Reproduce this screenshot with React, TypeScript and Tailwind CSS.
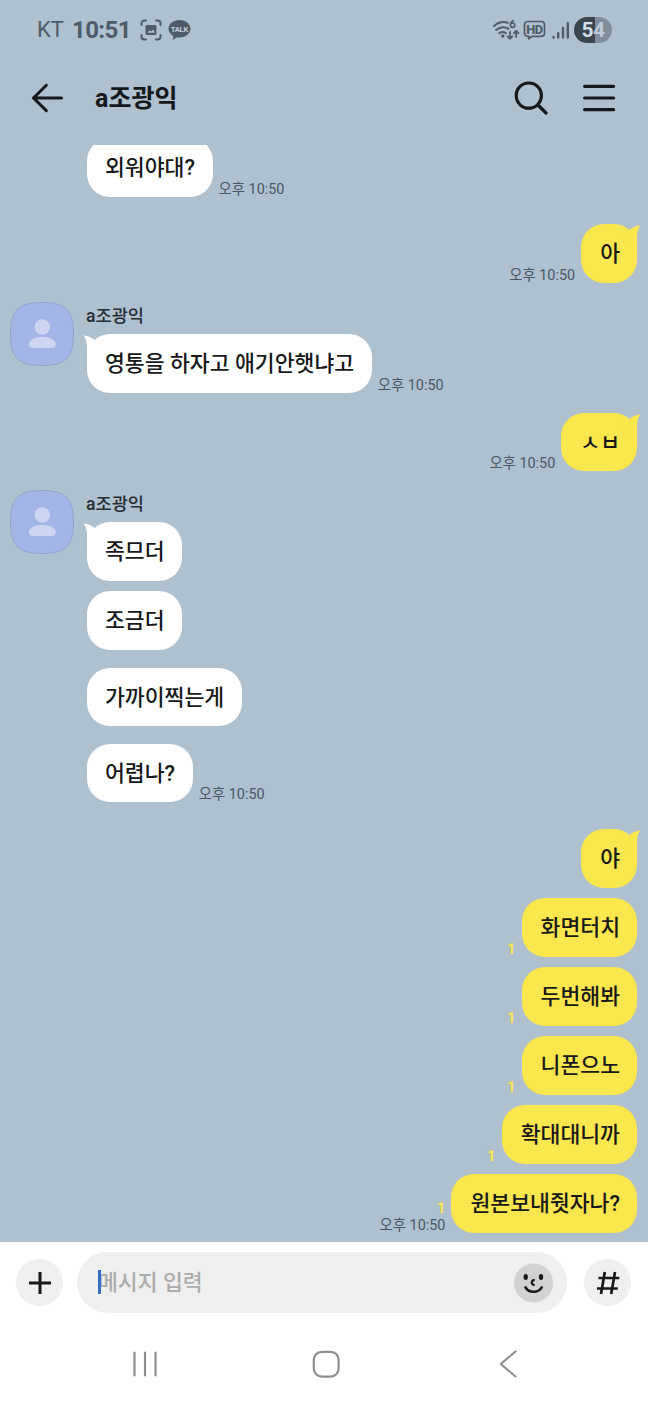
import type { ReactNode } from 'react'
import { clsx } from 'clsx'

/* ── Data ──────────────────────────────────────── */
interface Message {
  text: string
  gap?: string
  time?: string
  unread?: number
}
interface Group {
  from: 'me' | 'other'
  tail: boolean
  gap: string
  messages: Message[]
}

const NAME = 'a조광익'
const TIME = '오후 10:50'

const groups: Group[] = [
  { from: 'other', tail: false, gap: '-mt-[6.6px]', messages: [{ text: '외워야대?', time: TIME }] },
  { from: 'me', tail: true, gap: 'mt-[27.3px]', messages: [{ text: '아', time: TIME }] },
  { from: 'other', tail: true, gap: 'mt-[19px]', messages: [{ text: '영통을 하자고 애기안햇냐고', time: TIME }] },
  { from: 'me', tail: true, gap: 'mt-[20px]', messages: [{ text: 'ㅅㅂ', time: TIME }] },
  {
    from: 'other',
    tail: true,
    gap: 'mt-[18.6px]',
    messages: [
      { text: '족므더' },
      { text: '조금더', gap: 'mt-[10.6px]' },
      { text: '가까이찍는게', gap: 'mt-[17.7px]' },
      { text: '어렵나?', gap: 'mt-[17.5px]', time: TIME },
    ],
  },
  {
    from: 'me',
    tail: true,
    gap: 'mt-[27.3px]',
    messages: [
      { text: '야' },
      { text: '화면터치', gap: 'mt-[10.5px]', unread: 1 },
      { text: '두번해봐', gap: 'mt-[10.5px]', unread: 1 },
      { text: '니폰으노', gap: 'mt-[10.5px]', unread: 1 },
      { text: '확대대니까', gap: 'mt-[10.5px]', unread: 1 },
      { text: '원본보내줫자나?', gap: 'mt-[10.5px]', unread: 1, time: TIME },
    ],
  },
]

/* ── Status bar ────────────────────────────────── */
function StatusBar() {
  return (
    <div className="flex h-[60px] items-center justify-between pl-[37px] pr-[36px] text-[#4f5c67]">
      <div className="flex items-center">
        <span className="w-[35px] text-[22px] leading-none">KT</span>
        <span className="w-[68px] text-[24px] font-bold leading-none tracking-[-0.6px]">10:51</span>
        <svg width="22" height="22" viewBox="0 0 22 22" fill="none" stroke="currentColor" strokeWidth="2" strokeLinecap="round">
          <path d="M1.500 6V4.500a3 3 0 0 1 3-3H6M16 1.500h1.500a3 3 0 0 1 3 3V6M20.500 16v1.500a3 3 0 0 1-3 3H16M6 20.500H4.500a3 3 0 0 1-3-3V16" />
          <rect x="5.500" y="6" width="11" height="10" rx="1.500" fill="currentColor" stroke="none" />
          <path d="M7.500 13.800l2.200-2.600 1.600 1.300 1.900-2 1.600 3.300z" fill="#afc0cf" stroke="none" />
        </svg>
        <svg className="ml-[5px]" width="24" height="22" viewBox="0 0 24 22">
          <path d="M12.500 1C6.300 1 1.500 4.900 1.500 9.800c0 3.200 2 5.900 5 7.400L5.700 21l4.400-2.800c.8.1 1.600.2 2.400.2 6.200 0 11-3.800 11-8.600S18.700 1 12.500 1z" fill="currentColor" />
          <text x="12.400" y="12.600" textAnchor="middle" fontSize="7.600" fontWeight="700" letterSpacing="-0.3" fill="#c3d0db" fontFamily="Roboto, sans-serif">TALK</text>
        </svg>
      </div>
      <div className="flex items-center">
        <svg width="28" height="22" viewBox="0 0 28 22" fill="none" stroke="currentColor" strokeWidth="2" strokeLinecap="round">
          <path d="M1 7C5.200 3.200 10.200 2.200 14.700 3.800M3.200 11c3.500-3 8-3.600 12-1.300M6.200 14.200c2-1.500 4.600-1.500 6.600 0" />
          <circle cx="9.800" cy="17" r="1.700" fill="currentColor" stroke="none" />
          <path d="M17 13v6.500m-2.300-2.200 2.300 2.400 2.300-2.400M23.200 18V12m-2.300 2.200L23.200 11.800l2.300 2.400" strokeWidth="1.800" />
          <path d="M20.500 1.600c-1.900.8-3.100 2.600-3.100 4.600a2.200 2.200 0 1 0 2.200-2.200c-.7 0-1.300.3-1.700.8" strokeWidth="1.600" />
        </svg>
        <svg className="ml-[1.5px]" width="23" height="22" viewBox="0 -1 23 22" fill="none">
          <path d="M4.500 1.500h14a3 3 0 0 1 3 3v8.800a3 3 0 0 1-3 3H8.800L5.800 18.800v-2.500H4.500a3 3 0 0 1-3-3V4.500a3 3 0 0 1 3-3z" stroke="currentColor" strokeWidth="1.700" strokeLinejoin="round" />
          <text x="11.400" y="13.500" textAnchor="middle" fontSize="12.800" fontWeight="800" letterSpacing="-0.500" fill="currentColor" fontFamily="Roboto, sans-serif">HD</text>
        </svg>
        <svg className="ml-[6px]" width="18" height="20" viewBox="0 0 18 20" stroke="currentColor" strokeWidth="2.400" strokeLinecap="round">
          <path d="M1.500 17.600v-.6M6.200 17.600v-4.400M11 17.600V8M15.800 17.600V3" />
        </svg>
        <div className="ml-[4.5px] flex h-[26px] w-[38px] items-center justify-center rounded-full bg-[linear-gradient(to_right,#3b454d_54%,#7f8e9a_54%)] text-[21px] font-bold leading-none tracking-[-0.6px] text-[#d0dfe9]">
          <span>5</span>
          <span className="text-[#bccbd7]">4</span>
        </div>
      </div>
    </div>
  )
}

/* ── Chat header ───────────────────────────────── */
function ChatHeader() {
  return (
    <header className="flex h-[75px] items-center pl-[31px] pr-[32.5px] text-[#15191c]">
      <svg width="34" height="32" viewBox="0 0 34 32" fill="none" stroke="currentColor" strokeWidth="3" strokeLinecap="round" strokeLinejoin="round">
        <path d="M15.300 3.200L2.500 16l12.800 12.600M2.500 16h28" />
      </svg>
      <h1 className="ml-[30px] flex-1 pt-[2px] text-[25px] font-bold leading-[36px]">{NAME}</h1>
      <svg width="34" height="34" viewBox="0 0 34 34" fill="none" stroke="currentColor" strokeWidth="3.200" strokeLinecap="round">
        <circle cx="14.800" cy="14.600" r="12.600" />
        <path d="M24 24l8 8" />
      </svg>
      <svg className="ml-[34px]" width="34" height="30" viewBox="0 0 34 30" stroke="currentColor" strokeWidth="3.200" strokeLinecap="round">
        <path d="M2.600 3.300h29M2.600 15h29M2.600 26.700h29" />
      </svg>
    </header>
  )
}

/* ── Messages ──────────────────────────────────── */
function Tail({ mine }: { mine: boolean }) {
  return (
    <svg
      className={clsx('absolute top-0', mine ? '-right-1 -scale-x-100 text-[#fae64d]' : '-left-1 text-white')}
      width="24"
      height="24"
      viewBox="-4 0 24 24"
      fill="currentColor"
    >
      <path d="M-2.700 1.400C1 1.600 5 3.600 8 6.200L16 12 0 24V13C0 9-.8 5-2.900 2.200-3.300 1.700-3.200 1.400-2.700 1.400z" />
    </svg>
  )
}

function Bubble({ mine, tail, children }: { mine: boolean; tail: boolean; children: ReactNode }) {
  return (
    <div
      className={clsx(
        'relative h-[58.5px] whitespace-nowrap rounded-[23px] text-[21.6px] font-medium leading-[60px] text-[#17181a]',
        mine ? 'bg-[#fae64d] pl-[19px] pr-[17px]' : 'bg-white pl-[18px] pr-[17.6px]',
      )}
    >
      {tail && <Tail mine={mine} />}
      <span className="relative">{children}</span>
    </div>
  )
}

function MessageRow({ mine, tail, message }: { mine: boolean; tail: boolean; message: Message }) {
  return (
    <div className={clsx('flex items-end gap-[6px]', mine && 'flex-row-reverse', message.gap)}>
      <Bubble mine={mine} tail={tail}>{message.text}</Bubble>
      <div className={clsx('relative top-px flex flex-col text-[14.4px] leading-[17px] text-[#4a5661]', mine && 'items-end')}>
        {message.unread && (
          <span className="text-[15px] font-bold text-[#f8e860] [text-shadow:0_0_1px_#a9a67a]">{message.unread}</span>
        )}
        {message.time && <time>{message.time}</time>}
      </div>
    </div>
  )
}

function Avatar() {
  return (
    <svg className="shrink-0" width="64" height="64" viewBox="0 0 64 64">
      <path d="M32 .5C55.500.5 63.500 8.500 63.500 32S55.500 63.500 32 63.500.5 55.500.5 32 8.500.5 32 .5z" fill="#a5b4e6" stroke="#94a3d0" />
      <circle cx="32.300" cy="25" r="7.800" fill="#cdd5f1" />
      <path d="M18.800 42.500c0-4.600 6-7.800 13.500-7.800s13.500 3.200 13.500 7.800c0 2.300-1.600 3.500-4 3.500h-19c-2.400 0-4-1.200-4-3.500z" fill="#cdd5f1" />
    </svg>
  )
}

function MessageGroup({ group }: { group: Group }) {
  const mine = group.from === 'me'
  const showProfile = !mine && group.tail
  return (
    <section className={clsx('flex', mine ? 'justify-end pr-[11px]' : 'pl-[10px]', group.gap)}>
      {!mine && <div className="w-[77px] shrink-0">{showProfile && <Avatar />}</div>}
      <div className="flex flex-col">
        {showProfile && <div className="-ml-px h-[32.5px] text-[17.6px] font-medium leading-[29px] text-[#262d33]">{NAME}</div>}
        {group.messages.map((m, i) => (
          <MessageRow key={m.text} mine={mine} tail={group.tail && i === 0} message={m} />
        ))}
      </div>
    </section>
  )
}

/* ── Input bar ─────────────────────────────────── */
function InputBar() {
  return (
    <div className="flex h-[81px] items-center bg-white pl-4 pr-[17px] text-[#17181a]">
      <button className="flex size-[47px] items-center justify-center rounded-full bg-[#efefef]">
        <svg width="24" height="24" viewBox="0 0 24 24" stroke="currentColor" strokeWidth="3">
          <path d="M12 1v22M1 12h22" />
        </svg>
      </button>
      <div className="ml-[14px] flex h-[61px] w-[490px] items-center rounded-full bg-[#efefef] pl-[21px] pr-[13px]">
        <span className="relative flex-1 text-[21.6px] font-medium leading-[62px] text-[#ababab]">
          메시지 입력
          <span className="absolute left-0 top-[18px] h-6 w-[3px] bg-[#3a6fc8]" />
        </span>
        <svg width="40" height="40" viewBox="0 0 40 40" fill="none" stroke="currentColor" strokeLinecap="round">
          <circle cx="19.500" cy="20" r="19.500" fill="#d2d2d2" stroke="none" />
          <ellipse cx="11.700" cy="14" rx="2.200" ry="2.900" fill="currentColor" stroke="none" />
          <ellipse cx="27" cy="14" rx="2.200" ry="2.900" fill="currentColor" stroke="none" />
          <path d="M19.900 17.200c-2.600.4-3 4-.2 4.700" strokeWidth="2.200" />
          <path d="M11.500 24.300c3.300 6 12.800 6 16.200 0" strokeWidth="2.600" />
        </svg>
      </div>
      <button className="ml-[17px] flex size-[47px] items-center justify-center rounded-full bg-[#efefef]">
        <svg width="24" height="24" viewBox="0 0 24 24" stroke="currentColor" strokeWidth="2.700">
          <path d="M8.800 1L5 23M19 1l-3.800 22M2.500 7h20.800M1 17.500h20.800" />
        </svg>
      </button>
    </div>
  )
}

function NavBar() {
  return (
    <nav className="flex h-[81px] items-center bg-white pl-[132px] text-[#8f8f8f]">
      <svg width="26" height="28" viewBox="0 0 26 28" stroke="currentColor" strokeWidth="2.200" strokeLinecap="round">
        <path d="M2.500 2.500v23M13 2.500v23M23.500 2.500v23" />
      </svg>
      <svg className="ml-[153px]" width="30" height="30" viewBox="0 0 30 30" fill="none" stroke="currentColor" strokeWidth="2.200">
        <rect x="2.800" y="2.800" width="24.800" height="24.800" rx="8" />
      </svg>
      <svg className="ml-[157px]" width="20" height="30" viewBox="0 0 20 30" fill="none" stroke="currentColor" strokeWidth="2.200" strokeLinecap="round" strokeLinejoin="round">
        <path d="M17.500 2.500L2.800 15l14.700 12.500" />
      </svg>
    </nav>
  )
}

export default function App() {
  return (
    <div className="flex h-[1404px] w-[648px] flex-col overflow-hidden bg-[#afc0cf] font-[Roboto,'Noto_Sans_CJK_KR',sans-serif]">
      <StatusBar />
      <ChatHeader />
      <main className="mt-[10px] h-[1097px] shrink-0 overflow-hidden">
        {groups.map((g, i) => (
          <MessageGroup key={i} group={g} />
        ))}
      </main>
      <InputBar />
      <NavBar />
    </div>
  )
}
